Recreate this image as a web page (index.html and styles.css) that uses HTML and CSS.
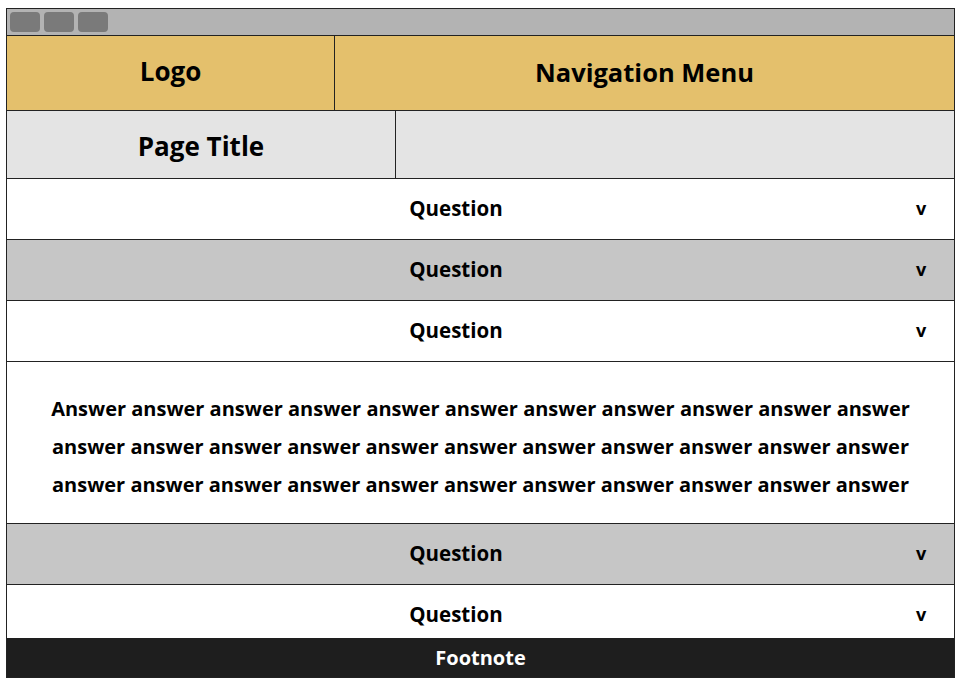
FILE: index.html
```html
<!DOCTYPE html>
<html>
<head>
<meta charset="utf-8">
<link rel="stylesheet" href="styles.css">
</head>
<body>
<div class="frame">
  <div class="titlebar">
    <span class="btn"></span><span class="btn"></span><span class="btn"></span>
  </div>
  <div class="header">
    <div class="logo">Logo</div>
    <div class="nav">Navigation Menu</div>
  </div>
  <div class="pagerow">
    <div class="pagetitle">Page Title</div>
    <div class="pagefill"></div>
  </div>
  <div class="content">
    <div class="q white"><span class="qt">Question</span><span class="chev">v</span></div>
    <div class="q grey"><span class="qt">Question</span><span class="chev">v</span></div>
    <div class="q white"><span class="qt">Question</span><span class="chev">v</span></div>
    <div class="answer">Answer answer answer answer answer answer answer answer answer answer answer answer answer answer answer answer answer answer answer answer answer answer answer answer answer answer answer answer answer answer answer answer answer</div>
    <div class="q grey"><span class="qt">Question</span><span class="chev">v</span></div>
    <div class="q white"><span class="qt">Question</span><span class="chev">v</span></div>
  </div>
  <div class="footer">Footnote</div>
</div>
</body>
</html>
```
FILE: styles.css
```css
html, body {
  margin: 0;
  padding: 0;
  background: #ffffff;
}
body {
  font-family: "Open Sans", "Liberation Sans", sans-serif;
  font-weight: 700;
  color: #000;
}
.frame {
  margin: 8px 0 0 6px;
  width: 947px;
  height: 668px;
  border: 1px solid #222;
  display: flex;
  flex-direction: column;
  overflow: hidden;
}
.titlebar {
  height: 26px;
  background: #b3b3b3;
  border-bottom: 1px solid #222;
  display: flex;
  align-items: center;
  gap: 4px;
  padding-left: 3px;
  flex: none;
}
.btn {
  width: 30px;
  height: 20px;
  border-radius: 4px;
  background: #7a7a7a;
}
.header {
  height: 74px;
  background: #e4c06c;
  border-bottom: 1px solid #222;
  display: flex;
  flex: none;
  font-size: 26px;
}
.logo {
  width: 328px;
  border-right: 1px solid #222;
  display: flex;
  align-items: center;
  justify-content: center;
  padding-bottom: 5px;
  box-sizing: border-box;
}
.nav {
  flex: 1;
  display: flex;
  align-items: center;
  justify-content: center;
  padding-bottom: 3px;
  box-sizing: border-box;
  font-size: 25.5px;
}
.pagerow {
  height: 67px;
  background: #e4e4e4;
  border-bottom: 1px solid #222;
  display: flex;
  flex: none;
  font-size: 26px;
}
.pagetitle {
  width: 389px;
  border-right: 1px solid #222;
  display: flex;
  align-items: center;
  justify-content: center;
  padding-top: 2px;
  box-sizing: border-box;
}
.pagefill { flex: 1; }
.content {
  flex: 1;
  overflow: hidden;
}
.q {
  height: 61px;
  box-sizing: border-box;
  border-bottom: 1px solid #222;
  display: flex;
  align-items: center;
  font-size: 20.5px;
  padding-bottom: 2px;
}
.q.white { background: #ffffff; }
.q.grey { background: #c6c6c6; }
.qt {
  flex: 1;
  text-align: center;
}
.chev {
  width: 49px;
  font-size: 18px;
  font-weight: 700;
  text-align: left;
  padding-left: 11px;
  box-sizing: border-box;
}
.answer {
  border-bottom: 1px solid #222;
  box-sizing: border-box;
  height: 162px;
  display: flex;
  align-items: center;
  justify-content: center;
  text-align: center;
  font-size: 20px;
  line-height: 38px;
  padding: 8px 30px 0;
}
.footer {
  height: 39px;
  flex: none;
  background: #1e1e1e;
  color: #fff;
  font-size: 20px;
  display: flex;
  align-items: center;
  justify-content: center;
}
```
